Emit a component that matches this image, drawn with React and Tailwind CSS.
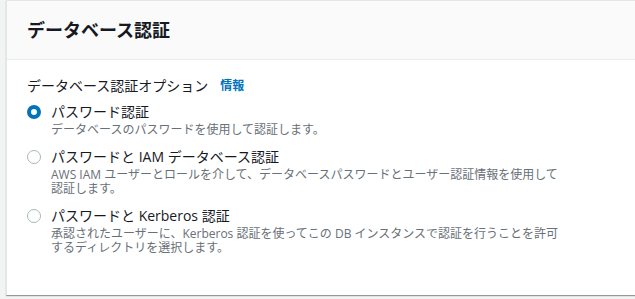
export default function App() {
  const options = [
    {
      label: 'パスワード認証',
      desc: 'データベースのパスワードを使用して認証します。',
      checked: true,
    },
    {
      label: 'パスワードと IAM データベース認証',
      desc: 'AWS IAM ユーザーとロールを介して、データベースパスワードとユーザー認証情報を使用して認証します。',
    },
    {
      label: 'パスワードと Kerberos 認証',
      desc: '承認されたユーザーに、Kerberos 認証を使ってこの DB インスタンスで認証を行うことを許可するディレクトリを選択します。',
    },
  ];

  return (
    <div
      className="min-h-screen bg-[#f2f3f3] pl-[6px] pb-[4px]"
      style={{ fontFamily: '"Open Sans", "Noto Sans CJK JP", sans-serif' }}
    >
      <div className="bg-white border-l border-t border-[#e4e5e5] shadow-[0_1px_1px_0_rgba(0,28,36,0.3),1px_1px_1px_0_rgba(0,28,36,0.15)] h-[295px]">
        <div className="bg-[#fafafa] border-b border-[#eaeded] h-[59px] flex items-center px-5">
          <h2 className="text-[18px] font-bold text-[#16191f] leading-none">データベース認証</h2>
        </div>
        <div className="px-5 pt-[15px]">
          <div className="flex items-center gap-3 text-[14px] text-[#16191f] leading-[22px]">
            <span>データベース認証オプション</span>
            <span className="text-[12px] font-bold text-[#0073bb]">情報</span>
          </div>
          <div className="mt-[4px] flex flex-col gap-[9px]">
            {options.map((o) => (
              <div key={o.label} className="flex gap-[10px]">
                <div className="pt-[4px]">
                  {o.checked ? (
                    <div className="w-[14px] h-[14px] rounded-full border-[4px] border-[#0073bb] bg-white" />
                  ) : (
                    <div className="w-[14px] h-[14px] rounded-full border-[1.5px] border-[#aab7b8] bg-white" />
                  )}
                </div>
                <div className="w-[515px]">
                  <div className="text-[14px] text-[#16191f] leading-[22px]">{o.label}</div>
                  <div className="text-[12px] text-[#687078] leading-[14px]">{o.desc}</div>
                </div>
              </div>
            ))}
          </div>
        </div>
      </div>
    </div>
  );
}
